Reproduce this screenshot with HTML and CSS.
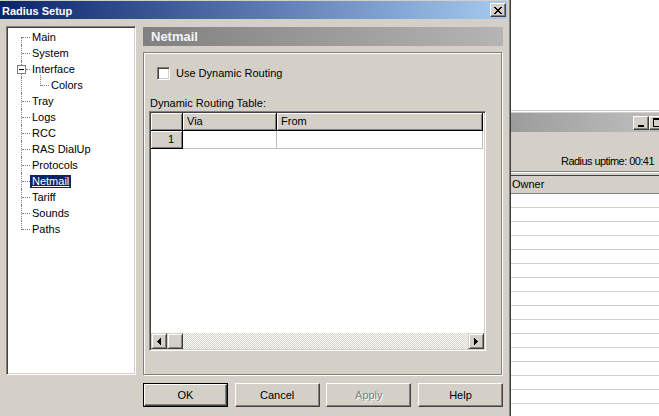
FILE: index.html
```html
<!DOCTYPE html>
<html>
<head>
<meta charset="utf-8">
<title>Radius Setup</title>
<link rel="stylesheet" href="styles.css">
</head>
<body>
<div class="desktop">
  <div class="bgwin">
    <div class="bg-in">
      <div class="bg-title">
        <span class="capbtn"><svg width="6" height="2" viewBox="0 0 6 2" shape-rendering="crispEdges"><rect x="0" y="0" width="6" height="2" fill="#000"/></svg></span>
        <span class="capbtn"><svg width="9" height="9" viewBox="0 0 9 9" shape-rendering="crispEdges"><path d="M0 0h9v2H0zM0 0h1v9H0zM8 0h1v9H8zM0 8h9v1H0z" fill="#000"/></svg></span>
      </div>
      <div class="bg-client">
        <div class="uptime">Radius uptime: 00:41</div>
        <div class="listview">
          <div class="lv-head"><div class="lv-col">Owner</div></div>
          <div class="lv-rows">
            <div class="lv-row"></div><div class="lv-row"></div><div class="lv-row"></div>
            <div class="lv-row"></div><div class="lv-row"></div><div class="lv-row"></div>
            <div class="lv-row"></div><div class="lv-row"></div><div class="lv-row"></div>
            <div class="lv-row"></div><div class="lv-row"></div><div class="lv-row"></div>
            <div class="lv-row"></div><div class="lv-row"></div><div class="lv-row"></div>
            <div class="lv-row"></div>
          </div>
        </div>
      </div>
    </div>
  </div>

  <div class="dialog">
    <div class="dlg-inner">
      <div class="titlebar">
        <span class="title">Radius Setup</span>
        <span class="closebtn"><svg width="8" height="7" viewBox="0 0 8 7" shape-rendering="crispEdges"><path d="M0 0h2v1H0zM6 0h2v1H6zM1 1h2v1H1zM5 1h2v1H5zM2 2h4v1H2zM3 3h2v1H3zM2 4h4v1H2zM1 5h2v1H1zM5 5h2v1H5zM0 6h2v1H0zM6 6h2v1H6z" fill="#000"/></svg></span>
      </div>
      <div class="dlg-body">
        <div class="tree">
          <div class="node first"><span class="lbl">Main</span></div>
          <div class="node"><span class="lbl">System</span></div>
          <div class="node parent"><span class="expander"></span><span class="lbl">Interface</span></div>
          <div class="node child"><span class="lbl">Colors</span></div>
          <div class="node"><span class="lbl">Tray</span></div>
          <div class="node"><span class="lbl">Logs</span></div>
          <div class="node"><span class="lbl">RCC</span></div>
          <div class="node"><span class="lbl">RAS DialUp</span></div>
          <div class="node"><span class="lbl">Protocols</span></div>
          <div class="node"><span class="lbl selected">Netmail</span></div>
          <div class="node"><span class="lbl">Tariff</span></div>
          <div class="node"><span class="lbl">Sounds</span></div>
          <div class="node last"><span class="lbl">Paths</span></div>
        </div>
        <div class="rcol">
          <div class="panel-head">Netmail</div>
          <div class="frame">
            <div class="check"><span class="cbox"></span><span>Use Dynamic Routing</span></div>
            <div class="tbl-label">Dynamic Routing Table:</div>
            <div class="grid">
              <div class="g-row g-head">
                <div class="g-cell c0 hdr"></div>
                <div class="g-cell c1 hdr">Via</div>
                <div class="g-cell c2 hdr">From</div>
              </div>
              <div class="g-row g-data">
                <div class="g-cell c0 hdr num">1</div>
                <div class="g-cell c1 dat"></div>
                <div class="g-cell c2 dat"></div>
              </div>
              <div class="g-fill"></div>
              <div class="hscroll">
                <span class="sbtn"><svg width="4" height="7" viewBox="0 0 4 7" shape-rendering="crispEdges"><path d="M3 0h1v7H3zM2 1h1v5H2zM1 2h1v3H1zM0 3h1v1H0z" fill="#000"/></svg></span>
                <span class="sbtn thumb"></span>
                <span class="track"></span>
                <span class="sbtn"><svg width="4" height="7" viewBox="0 0 4 7" shape-rendering="crispEdges"><path d="M0 0h1v7H0zM1 1h1v5H1zM2 2h1v3H2zM3 3h1v1H3z" fill="#000"/></svg></span>
              </div>
            </div>
          </div>
          <div class="btns">
            <span class="btn default"><span class="btn-face">OK</span></span>
            <span class="btn"><span class="btn-face">Cancel</span></span>
            <span class="btn disabled"><span class="btn-face">Apply</span></span>
            <span class="btn"><span class="btn-face">Help</span></span>
          </div>
        </div>
      </div>
    </div>
  </div>
</div>
</body>
</html>
```

FILE: styles.css
```css
* { box-sizing: border-box; }
html, body { margin: 0; padding: 0; }
body {
  width: 659px; height: 416px; overflow: hidden; background: #fff;
  font-family: "Liberation Sans", Arial, sans-serif; font-size: 11px; color: #000;
}
.desktop { position: relative; width: 659px; height: 416px; overflow: hidden; background: #fff; }

/* ---------- background window ---------- */
.bgwin {
  position: absolute; left: 511px; top: 110px; width: 200px; height: 320px;
  background: #d4d0c8; border-top: 1px solid #d4d0c8;
}
.bg-in { border-top: 1px solid #fff; padding-top: 1px; height: 100%; }
.bg-title {
  height: 19px; display: flex; align-items: center; padding-left: 122px; gap: 0;
  background: linear-gradient(to right, #9c9c9c, #b8b8b8 120px, #c0c0c0);
}
.capbtn {
  width: 16px; height: 14px; background: #d4d0c8; display: flex; align-items: center; justify-content: center;
  border: 1px solid; border-color: #fff #404040 #404040 #fff; box-shadow: inset -1px -1px #808080;
}
.capbtn:first-child svg { margin-top: 6px; margin-left: -1px; }
.bg-client { padding-top: 21px; }
.uptime {
  height: 16px; line-height: 16px; padding-left: 50px; white-space: nowrap;
  letter-spacing: -0.55px;
}
.listview {
  margin-top: 2px; border-top: 1px solid #808080; box-shadow: inset 0 1px #fff;
  padding-top: 3px; height: 260px;
}
.lv-head { height: 19px; border-top: 1px solid #404040; background: #d4d0c8; display: flex; }
.lv-col {
  width: 200px; height: 18px; line-height: 17px; padding-left: 1px;
  border-bottom: 1px solid #808080;
}
.lv-rows { background: #fff; height: 240px; }
.lv-row { height: 14px; border-bottom: 1px solid #d4d0c8; }

/* ---------- dialog ---------- */
.dialog {
  position: absolute; left: -4px; top: -3px; width: 515px; height: 430px;
  background: #d4d0c8; border: 1px solid; border-color: #d4d0c8 #404040 #404040 #d4d0c8;
}
.dlg-inner {
  height: 100%; border: 1px solid; border-color: #fff #808080 #808080 #fff; padding: 2px;
}
.titlebar {
  height: 18px; display: flex; align-items: flex-start; justify-content: space-between;
  background: linear-gradient(to right, #0a246a, #a6caf0);
}
.title { color: #fff; font-weight: bold; font-size: 11px; line-height: 18px; padding-left: 2px; padding-top: 1px; }
.closebtn {
  margin-top: 2px; margin-right: 1px; width: 16px; height: 14px; background: #d4d0c8;
  display: flex; align-items: center; justify-content: center;
  border: 1px solid; border-color: #fff #404040 #404040 #fff; box-shadow: inset -1px -1px #808080;
}
.closebtn svg { margin-left: -1px; }

.dlg-body { display: flex; padding: 7px 0 0 6px; }

/* tree */
.tree {
  width: 130px; height: 349px; background: #fff; padding-top: 2px;
  border: 1px solid; border-color: #808080 #fff #fff #808080;
  box-shadow: inset 1px 1px #404040, inset -1px -1px #d4d0c8;
}
.node {
  position: relative; height: 16px; display: flex; align-items: center;
  padding-left: 23px; white-space: nowrap;
}
.node::before {
  content: ""; position: absolute; left: 15px; top: 8px; width: 8px;
  border-top: 1px dotted #808080;
}
.node::after {
  content: ""; position: absolute; left: 14px; top: 0; height: 16px;
  border-left: 1px dotted #808080;
}
.node.first::after { top: 8px; height: 8px; }
.node.last::after { height: 9px; }
.node.child { padding-left: 42px; }
.node.child::before { left: 34px; width: 8px; }
.node.child .lbl::before {
  content: ""; position: absolute; left: 33px; top: -2px; height: 11px;
  border-left: 1px dotted #808080;
}
.lbl { display: inline-block; line-height: 13px; padding: 0 2px 0 2px; }
.lbl.selected { background: #0a246a; color: #fff; text-decoration: underline; }
.expander {
  position: absolute; left: 10px; top: 4px; width: 9px; height: 9px; z-index: 1;
  background: #fff; border: 1px solid #808080;
}
.expander::after {
  content: ""; position: absolute; left: 1px; top: 3px; width: 5px; height: 1px; background: #000;
}
.node.parent::before { left: 19px; width: 4px; }

/* right column */
.rcol { margin-left: 7px; width: 360px; display: flex; flex-direction: column; }
.panel-head {
  margin-top: 1px; height: 19px; line-height: 19px; padding-left: 8px;
  background: linear-gradient(to right, #808080, #b4b4b4);
  color: #f4f4f4; font-weight: bold; font-size: 13px;
}
.frame {
  margin-top: 6px; width: 359px; height: 323px; padding-top: 14px;
  border: 1px solid #808080; box-shadow: 1px 1px 0 #fff, inset 1px 1px 0 #fff;
}
.check { display: flex; align-items: center; height: 13px; margin-left: 13px; line-height: 13px; gap: 6px; }
.cbox {
  width: 13px; height: 13px; background: #fff; flex: none;
  border: 1px solid; border-color: #808080 #fff #fff #808080;
  box-shadow: inset 1px 1px #404040, inset -1px -1px #d4d0c8;
}
.tbl-label { margin-top: 15px; margin-left: 6px; height: 16px; line-height: 16px; }

.grid {
  margin-left: 5px; width: 337px; height: 240px; background: #fff; padding: 1px;
  display: flex; flex-direction: column;
  border: 1px solid; border-color: #808080 #fff #fff #808080;
  box-shadow: inset 1px 1px #404040, inset -1px -1px #d4d0c8;
}
.g-row { display: flex; height: 18px; flex: none; }
.g-cell { height: 18px; flex: none; line-height: 17px; }
.c0 { width: 32px; }
.c1 { width: 94px; }
.c2 { width: 206px; }
.hdr {
  background: #d4d0c8; border-right: 1px solid #000; border-bottom: 1px solid #000;
  box-shadow: inset 1px 1px #fff, inset -1px -1px #808080; padding-left: 4px;
}
.num { text-align: right; padding-right: 8px; padding-left: 0; }
.dat { border-right: 1px solid #c0c0c0; border-bottom: 1px solid #c0c0c0; background: #fff; }
.g-fill { flex: 1; }
.hscroll { display: flex; height: 16px; flex: none; }
.sbtn {
  width: 16px; height: 16px; flex: none; background: #d4d0c8;
  display: flex; align-items: center; justify-content: center;
  border: 1px solid; border-color: #d4d0c8 #404040 #404040 #d4d0c8;
  box-shadow: inset 1px 1px #fff, inset -1px -1px #808080;
}
.track {
  flex: 1; height: 16px;
  background-image: repeating-conic-gradient(#d4d0c8 0 25%, #fff 0 50%);
  background-size: 2px 2px;
}

.btns { margin-top: 8px; display: flex; justify-content: space-between; }
.btn {
  width: 85px; height: 24px; display: flex; background: #d4d0c8;
  border: 1px solid; border-color: #fff #404040 #404040 #fff;
  box-shadow: inset -1px -1px #808080;
}
.btn-face { flex: 1; display: flex; align-items: center; justify-content: center; line-height: 13px; }
.btn.default { border: 1px solid #000; }
.btn.default .btn-face {
  border: 1px solid; border-color: #fff #404040 #404040 #fff;
  box-shadow: inset -1px -1px #808080;
}
.btn.default { box-shadow: none; }
.btn.disabled .btn-face { color: #808080; text-shadow: 1px 1px 0 #fff; }
```
